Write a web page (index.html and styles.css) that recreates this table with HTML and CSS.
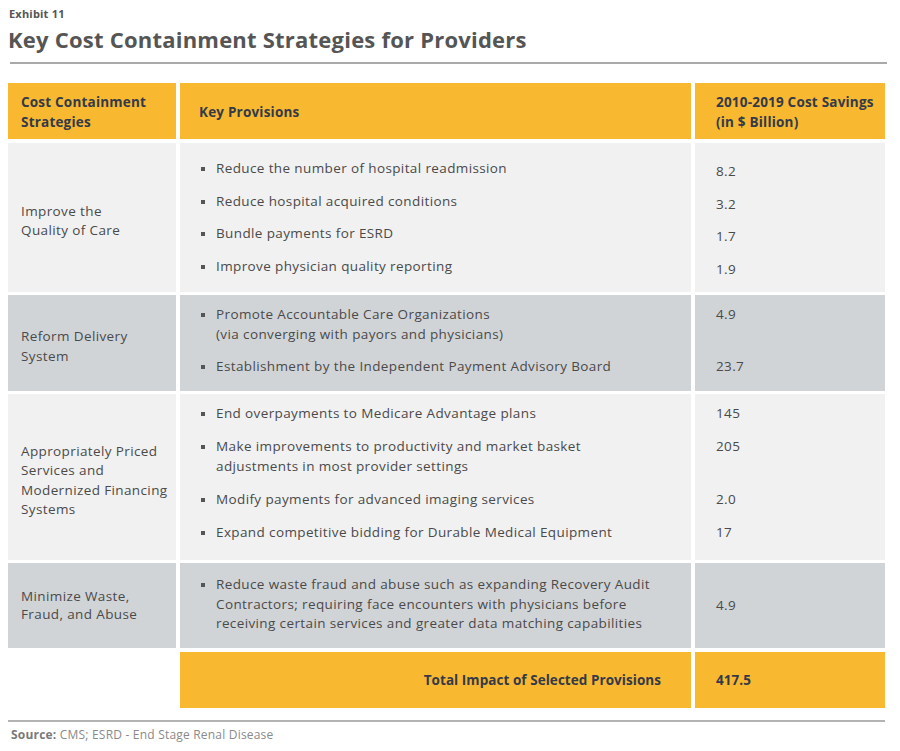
FILE: index.html
```html
<!DOCTYPE html>
<html>
<head>
<meta charset="utf-8">
<link rel="stylesheet" href="styles.css">
</head>
<body>
<div class="page">
  <div class="exhibit">Exhibit 11</div>
  <h1 class="title">Key Cost Containment Strategies for Providers</h1>
  <div class="rule"></div>

  <div class="table">
    <div class="row head">
      <div class="cell c1">Cost Containment<br>Strategies</div>
      <div class="cell c2 head-mid">Key Provisions</div>
      <div class="cell c3">2010-2019 Cost Savings<br>(in $ Billion)</div>
    </div>

    <div class="row light r1">
      <div class="cell c1">Improve the<br>Quality of Care</div>
      <div class="cell c2">
        <ul class="items">
          <li>Reduce the number of hospital readmission</li>
          <li>Reduce hospital acquired conditions</li>
          <li>Bundle payments for ESRD</li>
          <li>Improve physician quality reporting</li>
        </ul>
      </div>
      <div class="cell c3">
        <ul class="vals shifted">
          <li>8.2</li>
          <li>3.2</li>
          <li>1.7</li>
          <li>1.9</li>
        </ul>
      </div>
    </div>

    <div class="row dark r2">
      <div class="cell c1">Reform Delivery<br>System</div>
      <div class="cell c2">
        <ul class="items">
          <li>Promote Accountable Care Organizations<br>(via converging with payors and physicians)</li>
          <li>Establishment by the Independent Payment Advisory Board</li>
        </ul>
      </div>
      <div class="cell c3">
        <ul class="vals">
          <li class="two">4.9</li>
          <li>23.7</li>
        </ul>
      </div>
    </div>

    <div class="row light r3">
      <div class="cell c1">Appropriately Priced<br>Services and<br>Modernized Financing<br>Systems</div>
      <div class="cell c2">
        <ul class="items">
          <li>End overpayments to Medicare Advantage plans</li>
          <li>Make improvements to productivity and market basket<br>adjustments in most provider settings</li>
          <li>Modify payments for advanced imaging services</li>
          <li>Expand competitive bidding for Durable Medical Equipment</li>
        </ul>
      </div>
      <div class="cell c3">
        <ul class="vals">
          <li>145</li>
          <li class="two">205</li>
          <li>2.0</li>
          <li>17</li>
        </ul>
      </div>
    </div>

    <div class="row dark r4">
      <div class="cell c1">Minimize Waste,<br>Fraud, and Abuse</div>
      <div class="cell c2">
        <ul class="items">
          <li>Reduce waste fraud and abuse such as expanding Recovery Audit<br>Contractors; requiring face encounters with physicians before<br>receiving certain services and greater data matching capabilities</li>
        </ul>
      </div>
      <div class="cell c3 center">4.9</div>
    </div>

    <div class="row total">
      <div class="blank"></div>
      <div class="cell c2 total-label">Total Impact of Selected Provisions</div>
      <div class="cell c3 total-val">417.5</div>
    </div>
  </div>

  <div class="rule bottom"></div>
  <div class="source"><b>Source:</b> CMS; ESRD - End Stage Renal Disease</div>
</div>
</body>
</html>
```

FILE: styles.css
```css
* { box-sizing: border-box; }
html, body { margin: 0; padding: 0; background: #fff; }
body {
  font-family: "Open Sans", "DejaVu Sans", sans-serif;
  color: #4a4a4a;
  width: 900px;
  height: 751px;
  overflow: hidden;
}
.page {
  padding: 6px 0 0 8px;
  width: 892px;
}
.exhibit {
  font-size: 11px;
  font-weight: 700;
  color: #555;
  line-height: 16px;
  padding-left: 1px;
  letter-spacing: 0.2px;
}
.title {
  margin: 2px 0 0 0;
  font-size: 22px;
  font-weight: 700;
  color: #555;
  line-height: 30px;
  letter-spacing: 0.22px;
}
.rule {
  height: 2px;
  background: #a9a9a9;
  margin: 8px 0 0 2px;
  width: 877px;
}
.table {
  margin-top: 19px;
  display: flex;
  flex-direction: column;
  gap: 3px;
  width: 877px;
}
.row {
  display: flex;
  gap: 4px;
}
.cell {
  font-size: 13.5px;
  line-height: 19.5px;
  letter-spacing: 0.38px;
}
.c1 { width: 168px; padding-left: 13px; display: flex; align-items: center; }
.c2 { width: 511px; padding-left: 20px; }
.c3 { width: 190px; padding-left: 21px; }

.head { height: 56px; margin-bottom: 1px; }
.head .cell {
  background: #f8b930;
  color: #343a4a;
  font-weight: 700;
  line-height: 20px;
  letter-spacing: 0.2px;
  display: flex;
  align-items: center;
  padding-top: 1px;
}
.head .head-mid { padding-left: 19px; }

.light .cell { background: #f1f1f1; }
.dark .cell { background: #d1d4d7; }

.items, .vals {
  list-style: none;
  margin: 0;
  padding: 0;
  display: flex;
  flex-direction: column;
  gap: 13px;
}
.items li {
  position: relative;
  padding-left: 16px;
}
.items li::before {
  content: "";
  position: absolute;
  left: 1px;
  top: 8px;
  width: 4px;
  height: 4px;
  background: #555;
}
.vals li.two { height: 39px; }

.r1 { height: 149px; }
.r1 .c2, .r1 .c3 { padding-top: 16px; }
.r1 .c1, .r2 .c1, .r3 .c1 { padding-top: 7px; }
.vals.shifted { padding-top: 3px; }
.r2 { height: 96px; }
.r2 .c2, .r2 .c3 { padding-top: 10px; }
.r3 { height: 166px; }
.r3 .c2, .r3 .c3 { padding-top: 10px; }
.r3 .items, .r3 .vals { gap: 13.5px; }
.r4 { height: 85px; }
.r4 .c1 { line-height: 18.5px; padding-bottom: 1px; }
.r4 .c2 { padding-top: 12px; }
.c3.center { display: flex; align-items: center; }

.total { height: 56px; margin-top: 1px; }
.blank { width: 168px; }
.total .cell {
  background: #f8b930;
  color: #343a4a;
  font-weight: 700;
  letter-spacing: 0.05px;
  display: flex;
  align-items: center;
  padding-top: 1px;
}
.total-label { justify-content: flex-end; padding-right: 30px; }

.rule.bottom {
  margin: 12px 0 0 0;
  background: #b3b3b3;
}
.source {
  margin-top: 5px;
  padding-left: 3px;
  font-size: 12px;
  line-height: 16px;
  color: #8a8a8a;
  letter-spacing: 0.2px;
}
.source b { color: #7a7a7a; font-weight: 700; }
```
